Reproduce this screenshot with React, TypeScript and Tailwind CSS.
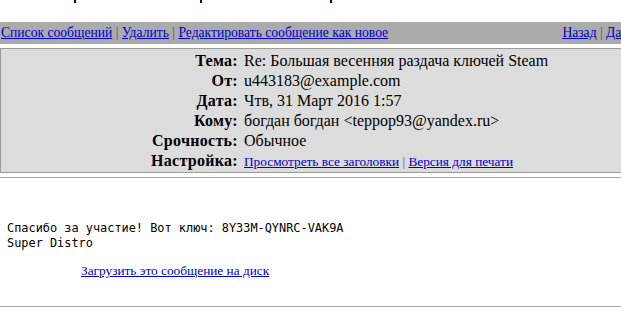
import React from "react";

const serif = { fontFamily: '"Liberation Serif", "Times New Roman", serif' };

function Row({ label, children }: { label: string; children: React.ReactNode }) {
  return (
    <div className="flex h-[20px] items-center">
      <div className="w-[237px] shrink-0 text-right font-bold text-black tracking-[0.3px]">{label}</div>
      <div className="pl-[6px] whitespace-nowrap text-black">{children}</div>
    </div>
  );
}

export default function App() {
  return (
    <div className="w-[621px] h-[321px] overflow-hidden bg-white text-[16px] leading-[20px]" style={serif}>
      {/* cut-off title descenders */}
      <div className="relative h-[22px]">
        <span className="absolute left-[74px] top-0 h-[3px] w-[2px] bg-[#000066]" />
        <span className="absolute left-[200px] top-0 h-[3px] w-[2px] bg-[#000066]" />
        <span className="absolute left-[330px] top-0 h-[3px] w-[2px] bg-[#000066]" />
      </div>
      {/* toolbar */}
      <div className="flex h-[22px] w-[653px] items-center justify-between bg-[#ababab] text-[13.6px] leading-[16px] whitespace-nowrap">
        <div className="pl-[1px]">
          <a className="text-[#0000cc] underline" href="#">Список сообщений</a>
          <span className="text-[#555]"> | </span>
          <a className="text-[#0000cc] underline" href="#">Удалить</a>
          <span className="text-[#555]"> | </span>
          <a className="text-[#0000cc] underline" href="#">Редактировать сообщение как новое</a>
        </div>
        <div className="pr-[2px]">
          <a className="text-[#0000cc] underline" href="#">Назад</a>
          <span className="text-[#555]"> | </span>
          <a className="text-[#0000cc] underline" href="#">Дальше</a>
        </div>
      </div>
      {/* header box */}
      <div className="mt-[4px] w-[680px] border-y border-l border-[#9a9a9a] bg-[#dcdcdc] pt-[2px] pb-[1px]">
        <Row label="Тема:">Re: Большая весенняя раздача ключей Steam</Row>
        <Row label="От:">u443183@example.com</Row>
        <Row label="Дата:">Чтв, 31 Март 2016 1:57</Row>
        <Row label="Кому:">богдан богдан &lt;teppop93@yandex.ru&gt;</Row>
        <Row label="Срочность:">Обычное</Row>
        <Row label="Настройка:">
          <span className="text-[13.3px]">
            <a className="text-[#0000cc] underline" href="#">Просмотреть все заголовки</a>
            <span className="text-[#555]"> | </span>
            <a className="text-[#0000cc] underline" href="#">Версия для печати</a>
          </span>
        </Row>
      </div>
      <div className="mt-[4px] h-[2px] border-t border-[#a8a8a8]" />
      {/* body */}
      <div
        className="pl-[7px] pt-[42px] text-[11.9px] leading-[15px] text-black"
        style={{ fontFamily: '"DejaVu Sans Mono", monospace' }}
      >
        <div>Спасибо за участие! Вот ключ: 8Y33M-QYNRC-VAK9A</div>
        <div>Super Distro</div>
      </div>
      <div className="pl-[81px] pt-[12px] text-[13.3px] leading-[16px]">
        <a className="text-[#0000cc] underline" href="#">Загрузить это сообщение на диск</a>
      </div>
      <div className="mt-[27px] border-t border-[#a8a8a8]" />
    </div>
  );
}
